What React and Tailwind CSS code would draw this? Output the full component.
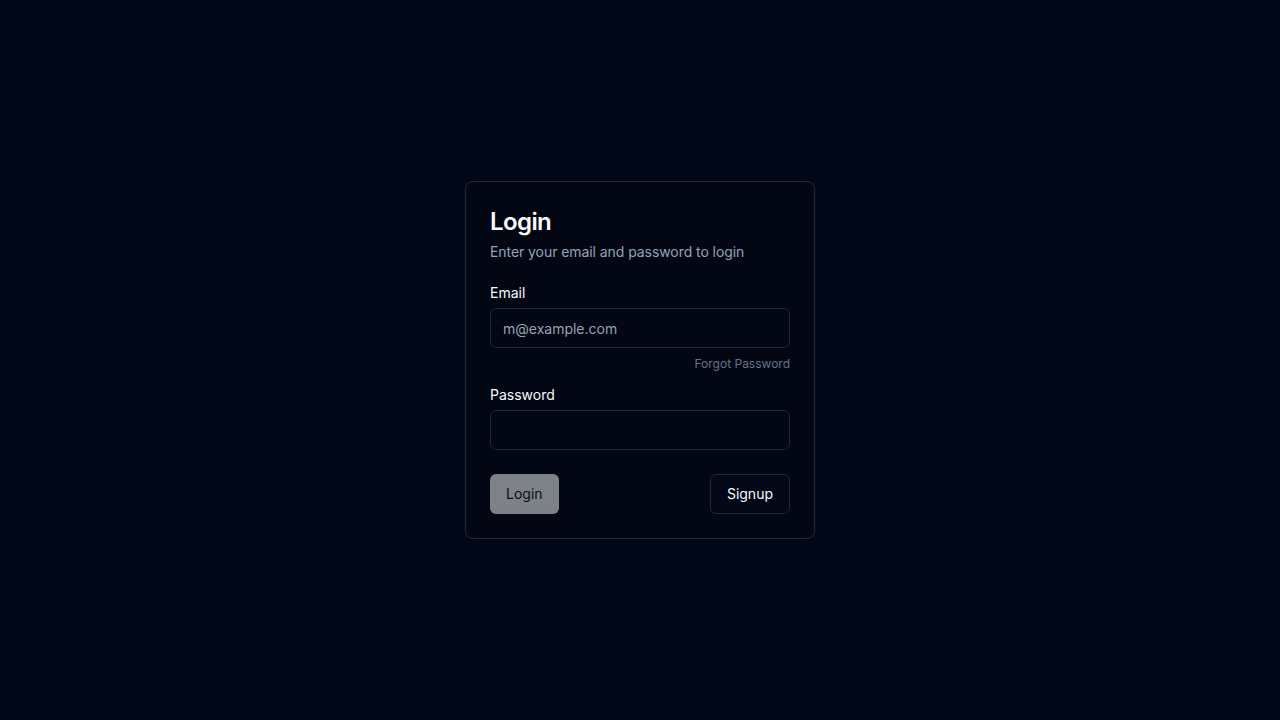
import React, { useState } from 'react';

const App = () => {
    const [email, setEmail] = useState('');
    const [password, setPassword] = useState('');

    return (
        <div className="min-h-screen w-full bg-[#000817] flex items-center justify-center font-['Inter',sans-serif]">
            <div className="w-[350px] rounded-lg border border-[#1e293b] bg-[#020713] p-6 text-[#f8fafc]">
                {/* header */}
                <h1 className="text-2xl font-semibold tracking-tight">Login</h1>
                <p className="mt-1 text-sm tracking-[-0.005em] text-[#94a3b8]">Enter your email and password to login</p>

                <form className="mt-6" onSubmit={(e) => e.preventDefault()}>
                    <label className="block text-sm font-normal leading-none">Email</label>
                    <input
                        type="email"
                        value={email}
                        onChange={(e) => setEmail(e.target.value)}
                        placeholder="m@example.com"
                        className="mt-2 flex h-10 w-full rounded-md border border-[#1e293b] bg-transparent px-3 py-2 text-sm text-[#f8fafc] placeholder:text-[#94a3b8] outline-none"
                    />
                    <div className="mt-2 flex justify-end">
                        <a href="#" className="text-xs leading-4 text-[#64748b]">Forgot Password</a>
                    </div>

                    <label className="mt-4 block text-sm font-normal leading-none">Password</label>
                    <input
                        type="password"
                        value={password}
                        onChange={(e) => setPassword(e.target.value)}
                        className="mt-2 flex h-10 w-full rounded-md border border-[#1e293b] bg-transparent px-3 py-2 text-sm outline-none"
                    />

                    <div className="mt-6 flex items-center justify-between">
                        <button
                            type="submit"
                            disabled
                            className="h-10 rounded-md bg-[#f8fafc] px-4 text-sm font-normal text-[#0f172a] opacity-50"
                        >
                            Login
                        </button>
                        <button
                            type="button"
                            className="h-10 rounded-md border border-[#1e293b] bg-[#020817] px-4 text-sm font-normal text-[#f8fafc]"
                        >
                            Signup
                        </button>
                    </div>
                </form>
            </div>
        </div>
    );
};

export default App;
